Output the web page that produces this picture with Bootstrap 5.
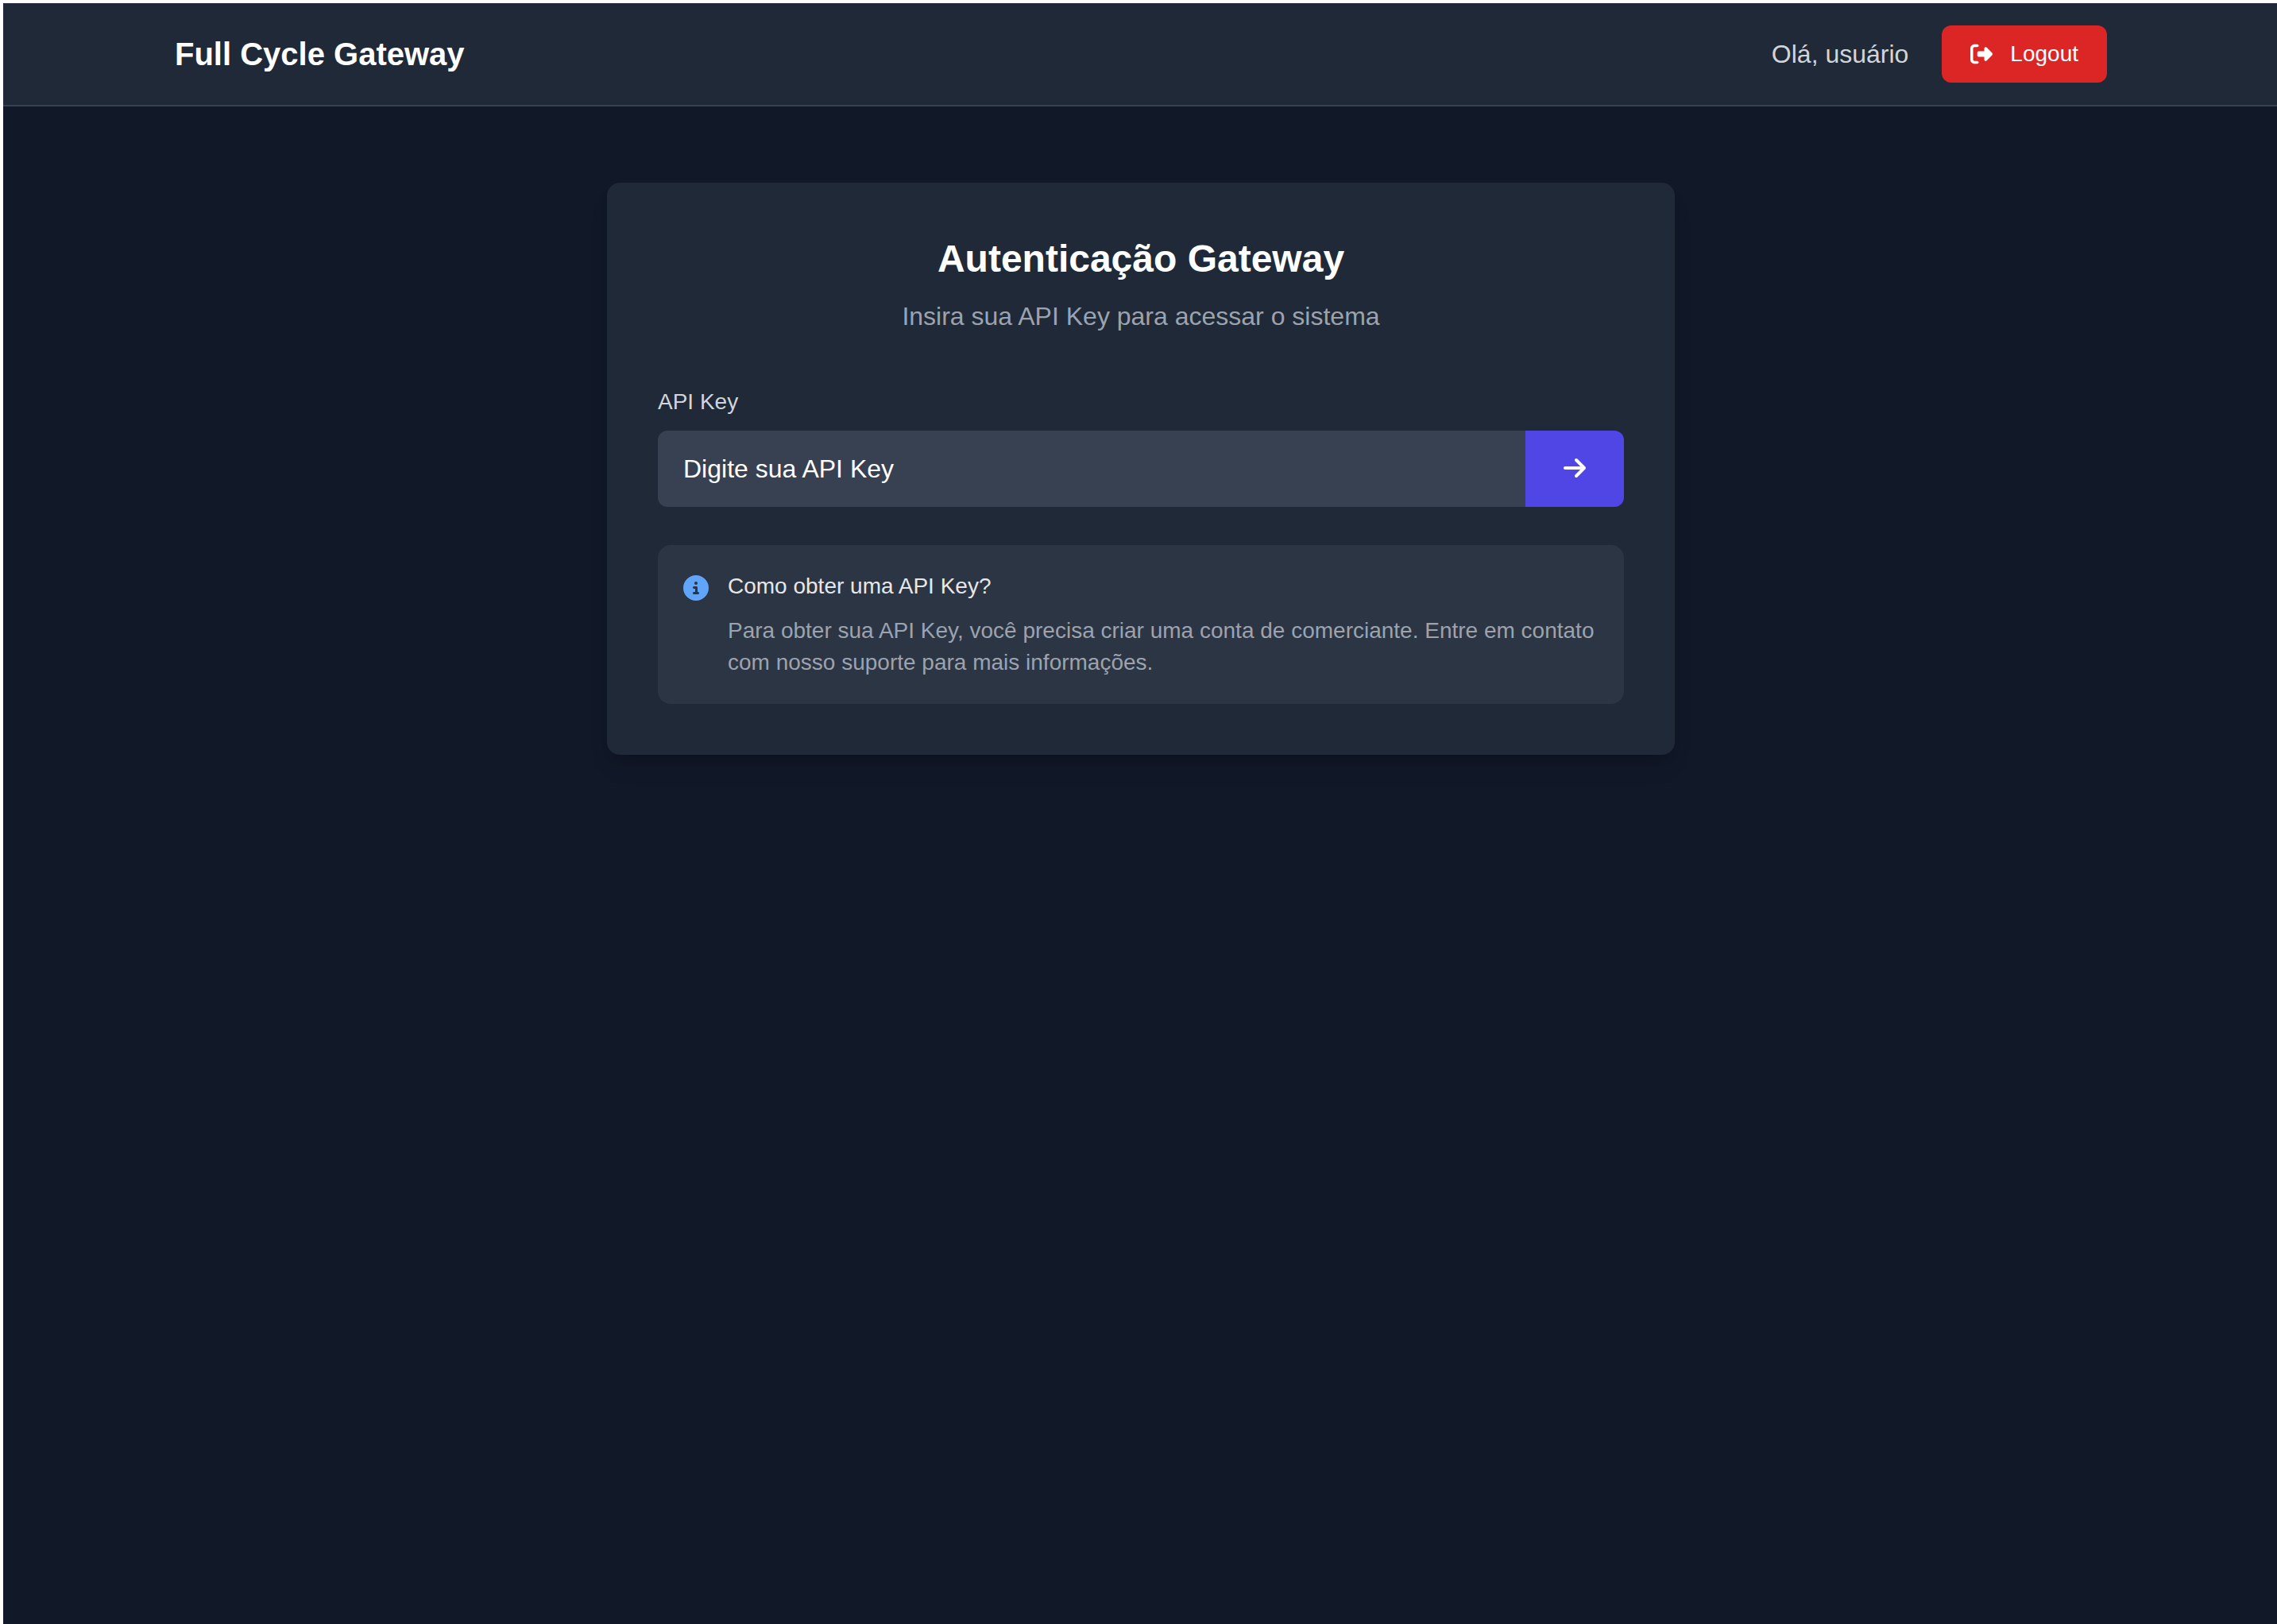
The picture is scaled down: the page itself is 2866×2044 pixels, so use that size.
<!DOCTYPE html>
<html lang="pt-BR">
<head>
<meta charset="utf-8">
<meta name="viewport" content="width=device-width, initial-scale=1">
<title>Full Cycle Gateway</title>
<link href="https://cdn.jsdelivr.net/npm/bootstrap@5.3.0/dist/css/bootstrap.min.css" rel="stylesheet">
<style>
  :root { --g900: #111827; --g800: #1f2937; --g700: #374151; --g400: #9ca3af; --g300: #d1d5db; --g200: #e5e7eb; }
  html { background: #fff; }
  body {
    font-family: "Liberation Sans", Arial, sans-serif;
    font-size: 32px; line-height: 48px; color: #fff;
    background: #fff;
    padding: 4px 0 0 4px;
  }
  .app-shell { background: var(--g900); min-height: calc(100vh - 4px); }
  .app-bar { background: var(--g800); border-bottom: 2px solid var(--g700); padding: 28px 0 28px 2px; }
  .app-width { max-width: 2432px; }
  .app-main { padding: 96px 0 96px 2px; }
  .brand { font-size: 40px; line-height: 56px; }
  .greeting { color: var(--g300); }
  .text-s { font-size: 28px; line-height: 40px; }
  .btn-logout {
    --bs-btn-color: #fff; --bs-btn-bg: #dc2626; --bs-btn-hover-color: #fff; --bs-btn-hover-bg: #b91c1c;
    --bs-btn-padding-x: 36px; --bs-btn-padding-y: 16px; --bs-btn-border-width: 0;
    --bs-btn-border-radius: 12px; --bs-btn-font-size: 28px; --bs-btn-line-height: 40px;
    gap: 22px;
  }
  .bar-gap { gap: 42px; }
  .ico { height: 1em; fill: currentColor; }
  .auth-card {
    --bs-card-bg: var(--g800); --bs-card-border-width: 0; --bs-card-border-radius: 16px; --bs-card-color: #fff;
    --bs-card-spacer-x: 64px; --bs-card-spacer-y: 64px;
    max-width: 1344px;
    box-shadow: 0 20px 30px -6px rgba(0,0,0,.1), 0 8px 12px -4px rgba(0,0,0,.1);
  }
  .auth-title { font-size: 48px; line-height: 64px; margin-bottom: 16px; }
  .auth-sub { color: var(--g400); margin-bottom: 64px; }
  .key-label { color: var(--g300); margin-bottom: 16px; }
  .key-group { margin-bottom: 48px; }
  .key-input, .key-input:focus {
    background: var(--g700); border: 0; color: #fff;
    font-size: 32px; line-height: 48px; padding: 24px 32px; border-radius: 12px;
  }
  .key-input::placeholder { color: #fff; opacity: 1; }
  .btn-go {
    --bs-btn-color: #fff; --bs-btn-bg: #4f46e5; --bs-btn-hover-color: #fff; --bs-btn-hover-bg: #4338ca;
    --bs-btn-padding-x: 48px; --bs-btn-padding-y: 24px; --bs-btn-border-width: 0;
    --bs-btn-border-radius: 12px; --bs-btn-font-size: 32px; --bs-btn-line-height: 48px;
  }
  .btn-go .ico { vertical-align: -.125em; }
  .key-group .btn-go { margin-left: 0; }
  .help-box { background: rgba(55,65,81,.5); border-radius: 16px; padding: 32px; gap: 24px; }
  .help-icon { color: #60a5fa; margin-top: 6px; }
  .help-title { color: var(--g200); margin-bottom: 16px; }
  .help-text { color: var(--g400); }
</style>
</head>
<body>
<div class="app-shell">
  <header class="app-bar">
    <div class="app-width mx-auto d-flex align-items-center justify-content-between">
      <a class="brand fw-bold text-white text-decoration-none" href="#">Full Cycle Gateway</a>
      <div class="bar-gap d-flex align-items-center">
        <span class="greeting">Olá, usuário</span>
        <button type="button" class="btn btn-logout d-flex align-items-center">
          <svg class="ico" viewBox="0 0 512 512" aria-hidden="true"><path d="M377.9 105.9L500.7 228.7c7.2 7.2 11.3 17.1 11.3 27.3s-4.1 20.1-11.3 27.3L377.9 406.1c-6.4 6.4-15 9.9-24 9.9c-18.7 0-33.9-15.2-33.9-33.9l0-62.1-128 0c-17.7 0-32-14.3-32-32l0-64c0-17.7 14.3-32 32-32l128 0 0-62.1c0-18.7 15.2-33.9 33.9-33.9c9 0 17.6 3.6 24 9.9zM160 96L96 96c-17.7 0-32 14.3-32 32l0 256c0 17.7 14.3 32 32 32l64 0c17.7 0 32 14.3 32 32s-14.3 32-32 32l-64 0c-53 0-96-43-96-96L0 128C0 75 43 32 96 32l64 0c17.7 0 32 14.3 32 32s-14.3 32-32 32z"/></svg>
          <span>Logout</span>
        </button>
      </div>
    </div>
  </header>

  <main class="app-main">
    <div class="card auth-card mx-auto">
      <div class="card-body">
        <h1 class="auth-title fw-bold text-center">Autenticação Gateway</h1>
        <p class="auth-sub text-center">Insira sua API Key para acessar o sistema</p>

        <form>
          <label class="key-label text-s d-block" for="api-key">API Key</label>
          <div class="input-group key-group">
            <input type="text" class="form-control key-input" id="api-key" placeholder="Digite sua API Key">
            <button type="button" class="btn btn-go" aria-label="Entrar">
              <svg class="ico" viewBox="0 0 448 512" aria-hidden="true"><path d="M438.6 278.6c12.5-12.5 12.5-32.8 0-45.3l-160-160c-12.5-12.5-32.8-12.5-45.3 0s-12.5 32.8 0 45.3L338.8 224 32 224c-17.7 0-32 14.3-32 32s14.3 32 32 32l306.7 0L233.4 393.4c-12.5 12.5-12.5 32.8 0 45.3s32.8 12.5 45.3 0l160-160z"/></svg>
            </button>
          </div>
        </form>

        <div class="help-box d-flex align-items-start">
          <svg class="ico help-icon flex-shrink-0" viewBox="0 0 512 512" aria-hidden="true"><path d="M256 512A256 256 0 1 0 256 0a256 256 0 1 0 0 512zM216 336l24 0 0-64-24 0c-13.3 0-24-10.7-24-24s10.7-24 24-24l48 0c13.3 0 24 10.7 24 24l0 88 8 0c13.3 0 24 10.7 24 24s-10.7 24-24 24l-80 0c-13.3 0-24-10.7-24-24s10.7-24 24-24zm40-208a32 32 0 1 1 0 64 32 32 0 1 1 0-64z"/></svg>
          <div>
            <h2 class="help-title text-s fw-normal">Como obter uma API Key?</h2>
            <p class="help-text text-s mb-0">Para obter sua API Key, você precisa criar uma conta de comerciante. Entre em contato com nosso suporte para mais informações.</p>
          </div>
        </div>
      </div>
    </div>
  </main>
</div>
<script src="https://cdn.jsdelivr.net/npm/bootstrap@5.3.0/dist/js/bootstrap.bundle.min.js"></script>
</body>
</html>
